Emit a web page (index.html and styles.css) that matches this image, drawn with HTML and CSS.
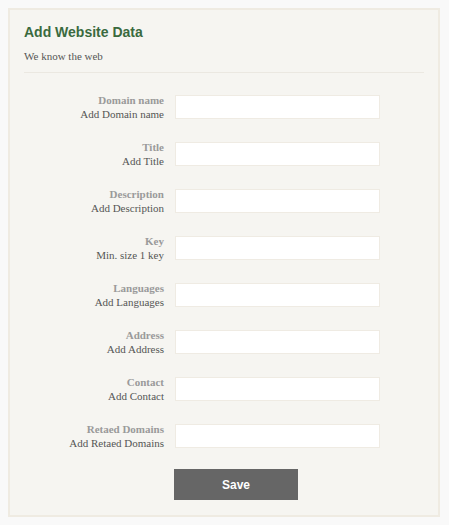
FILE: index.html
```html
<!DOCTYPE html>
<html>
<head>
<meta charset="utf-8">
<link rel="stylesheet" href="styles.css">
</head>
<body>
<div class="card">
  <h1 class="title">Add Website Data</h1>
  <p class="subtitle">We know the web</p>
  <hr class="divider">
  <form class="form">
    <label class="label"><b>Domain name</b><span>Add Domain name</span></label>
    <input class="field" type="text">
    <label class="label"><b>Title</b><span>Add Title</span></label>
    <input class="field" type="text">
    <label class="label"><b>Description</b><span>Add Description</span></label>
    <input class="field" type="text">
    <label class="label"><b>Key</b><span>Min. size 1 key</span></label>
    <input class="field" type="text">
    <label class="label"><b>Languages</b><span>Add Languages</span></label>
    <input class="field" type="text">
    <label class="label"><b>Address</b><span>Add Address</span></label>
    <input class="field" type="text">
    <label class="label"><b>Contact</b><span>Add Contact</span></label>
    <input class="field" type="text">
    <label class="label"><b>Retaed Domains</b><span>Add Retaed Domains</span></label>
    <input class="field" type="text">
    <span></span>
    <button class="save" type="button">Save</button>
  </form>
</div>
</body>
</html>
```
FILE: styles.css
```css
html, body {
  margin: 0;
  background: #f9f9f9;
}
body {
  padding: 8px 9px 7px 8px;
  font-family: "Liberation Serif", serif;
}
.card {
  width: 432px;
  height: 509px;
  box-sizing: border-box;
  border: 2px solid #efebe2;
  background: #f6f5f1;
  padding: 13px 14px 0 14px;
}
.title {
  margin: 0;
  font-family: "Liberation Sans", Arial, sans-serif;
  font-size: 14px;
  font-weight: bold;
  color: #3a6a3e;
  line-height: 18px;
}
.subtitle {
  margin: 8px 0 0;
  font-size: 11px;
  line-height: 14px;
  color: #555;
}
.divider {
  margin: 9px 0 0;
  border: 0;
  height: 1px;
  background: #ebe8e1;
  width: 400px;
}
.form {
  display: grid;
  grid-template-columns: 140px 205px;
  column-gap: 11px;
  row-gap: 23px;
  margin-top: 22px;
}
.label {
  display: flex;
  flex-direction: column;
  align-items: flex-end;
  text-align: right;
  font-size: 11px;
  line-height: 14px;
  margin: -2px 0;
}
.label b {
  color: #9a9a9a;
}
.label span {
  color: #555;
}
.field {
  box-sizing: border-box;
  height: 24px;
  width: 205px;
  margin: 0;
  border: 1px solid #efebe3;
  background: #fff;
  outline: none;
}
.save {
  margin: -2px 0 0 -1px;
  width: 124px;
  height: 31px;
  border: 0;
  background: #666;
  color: #fff;
  font-family: "Liberation Sans", Arial, sans-serif;
  font-weight: bold;
  font-size: 12px;
  cursor: pointer;
}
```
